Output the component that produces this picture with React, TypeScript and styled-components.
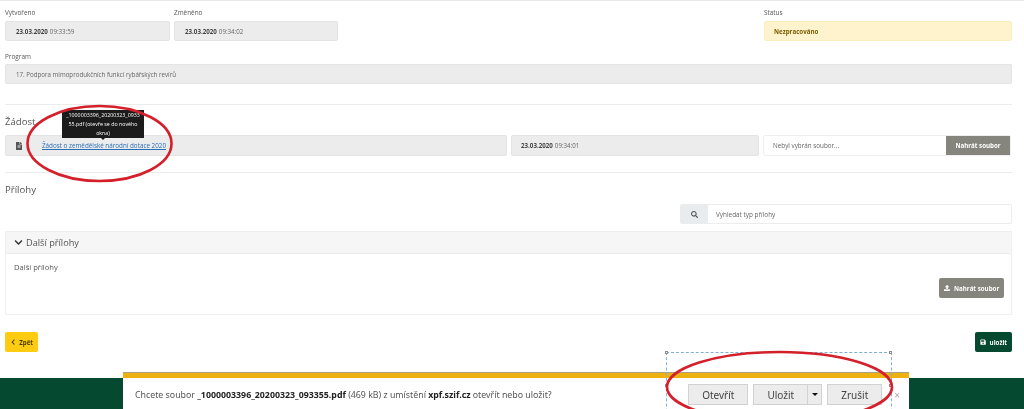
import React from 'react'
import styled, { createGlobalStyle } from 'styled-components'
import { FaChevronDown, FaChevronLeft, FaFileAlt, FaSave, FaSearch, FaUpload } from 'react-icons/fa'

const Global = createGlobalStyle`
  html, body {
    margin: 0;
    padding: 0;
    background: #fff;
  }
  * {
    box-sizing: border-box;
  }
`

const Page = styled.div`
  position: relative;
  width: 1024px;
  height: 409px;
  overflow: hidden;
  background: #fff;
  font-family: "Open Sans", "Liberation Sans", sans-serif;
  color: #555;
  filter: blur(0.45px);
`

const Content = styled.div`
  padding: 0 12px 0 5px;
  border-top: 1px solid #e8e8e8;
`

const TopGrid = styled.div`
  display: grid;
  grid-template-columns: 165px 164px 1fr 248px;
  column-gap: 4px;
  padding-top: 7px;
`

const Column = styled.div<{ $col?: number }>`
  grid-column: ${(p) => p.$col ?? 'auto'};
`

const Label = styled.div`
  font-size: 6.4px;
  line-height: 10px;
  margin-bottom: 3px;
  color: #555;
`

const Field = styled.div<{ $tone?: 'grey' | 'yellow' }>`
  height: 20px;
  display: flex;
  align-items: center;
  padding-left: ${(p) => (p.$tone === 'yellow' ? 9 : 10)}px;
  font-size: 6.2px;
  border-radius: 2px;
  background: ${(p) => (p.$tone === 'yellow' ? '#fff3cd' : '#ececec')};
  border: 1px solid ${(p) => (p.$tone === 'yellow' ? '#fbeebb' : '#e4e4e4')};
  color: ${(p) => (p.$tone === 'yellow' ? '#7a5c00' : '#666')};

  b {
    color: #444;
    margin-right: 2px;
  }
`

const ProgramBlock = styled.div`
  margin-top: 11px;

  ${Label} {
    margin-bottom: 2px;
  }
`

const Rule = styled.hr<{ $top: number }>`
  border: 0;
  border-top: 1px solid #ececec;
  margin: ${(p) => p.$top}px 0 0;
`

const Heading = styled.h3<{ $top: number }>`
  margin: ${(p) => p.$top}px 0 0;
  font-size: 9.6px;
  line-height: 16px;
  font-weight: 400;
  color: #555;
`

const RequestRow = styled.div`
  display: grid;
  grid-template-columns: 502px 248px 248px;
  column-gap: 4px;
  margin-top: 5px;
  height: 21px;
`

const FileCell = styled(Field)`
  height: 21px;
  padding-left: 10px;
  gap: 20px;

  svg {
    flex: none;
    width: 6px;
    height: 8px;
    color: #555;
  }
`

const DateCell = styled(Field)`
  height: 21px;
  padding-left: 9px;
`

const FileLink = styled.a`
  font-size: 6.3px;
  color: #2a6db5;
  text-decoration: underline;
`

const UploadBox = styled.div`
  display: flex;
  height: 21px;
  border: 1px solid #efefef;
  background: #fff;
  border-radius: 2px;
`

const UploadHint = styled.div`
  flex: 1;
  display: flex;
  align-items: center;
  padding-left: 9px;
  font-size: 6.3px;
  color: #666;
`

const GreyButton = styled.button`
  display: flex;
  align-items: center;
  justify-content: center;
  gap: 4px;
  border: 0;
  padding: 0;
  background: #85857d;
  color: #fff;
  font: 700 6.2px "Open Sans", "Liberation Sans", sans-serif;
`

const UploadButton = styled(GreyButton)`
  width: 64px;
`

const SearchRow = styled.div`
  display: flex;
  justify-content: flex-end;
  margin-top: 6px;
`

const SearchBox = styled.div`
  width: 332px;
  height: 20px;
  display: flex;
  border: 1px solid #ececec;
  border-radius: 2px;
`

const SearchAddon = styled.div`
  width: 27px;
  display: flex;
  align-items: center;
  justify-content: center;
  background: #e9ecef;
  color: #555;
  font-size: 7px;
`

const SearchText = styled.div`
  flex: 1;
  display: flex;
  align-items: center;
  padding-left: 8px;
  font-size: 6.4px;
  color: #666;
`

const Panel = styled.section`
  margin-top: 7px;
  height: 84px;
  border: 1px solid #efefef;
  display: flex;
  flex-direction: column;
`

const PanelHead = styled.div`
  height: 22px;
  display: flex;
  align-items: center;
  gap: 3px;
  padding-left: 8px;
  background: #f6f6f6;
  border-bottom: 1px solid #ececec;
  font-size: 9.2px;
  color: #555;

  svg {
    color: #333;
    font-size: 9px;
  }
`

const PanelBody = styled.div`
  flex: 1;
  display: flex;
  flex-direction: column;
  padding: 8px 7px 16px 8px;
  font-size: 7.6px;
  line-height: 10px;
  color: #555;
`

const PanelAction = styled.div`
  margin-top: auto;
  display: flex;
  justify-content: flex-end;
`

const PanelButton = styled(GreyButton)`
  width: 65px;
  height: 20px;
  border-radius: 2px;
`

const ActionRow = styled.div`
  display: flex;
  justify-content: space-between;
  margin-top: 17px;
`

const ActionButton = styled.button<{ $tone: 'yellow' | 'green' }>`
  height: 20px;
  display: flex;
  align-items: center;
  gap: 3px;
  border: 0;
  border-radius: 2px;
  padding: 0 5px;
  font: 700 6.2px "Open Sans", "Liberation Sans", sans-serif;
  background: ${(p) => (p.$tone === 'yellow' ? '#fdcb12' : '#054931')};
  color: ${(p) => (p.$tone === 'yellow' ? '#4a3c00' : '#fff')};
`

const Footer = styled.footer`
  height: 31px;
  margin-top: 26px;
  background: #054931;
`

const Tooltip = styled.div`
  position: absolute;
  left: 62px;
  top: 110px;
  width: 82px;
  height: 28px;
  padding: 1px 4px 0;
  background: #1b1b1b;
  color: #fff;
  font-size: 5.3px;
  line-height: 9px;
  text-align: center;

  &::after {
    content: '';
    position: absolute;
    left: 38px;
    bottom: -2px;
    border: 3px solid transparent;
    border-bottom: 0;
    border-top-color: #1b1b1b;
  }
`

const DownloadBar = styled.div`
  position: absolute;
  left: 123px;
  top: 373px;
  width: 786px;
  height: 36px;
  display: flex;
  align-items: center;
  justify-content: space-between;
  padding: 2px 9px 0 12px;
  background: #fff;
  border-top: 5px solid #edb20f;
  box-shadow: 0 -1px 0 #aaa08a;
  font-family: "Noto Sans", "Open Sans", sans-serif;
  font-size: 8.8px;
  color: #555;

  b {
    color: #222;
  }
`

const BarButtons = styled.div`
  display: flex;
  align-items: center;
  gap: 5px;
`

const BarButton = styled.div<{ $w: number }>`
  width: ${(p) => p.$w}px;
  height: 21px;
  display: flex;
  align-items: center;
  justify-content: center;
  background: #ececec;
  border: 1px solid #d2d2d2;
  font-size: 10px;
  color: #444;
`

const SplitButton = styled.div`
  display: flex;
`

const Caret = styled.div`
  width: 14px;
  height: 21px;
  display: flex;
  align-items: center;
  justify-content: center;
  background: #ececec;
  border: 1px solid #d2d2d2;
  border-left: 0;

  &::after {
    content: '';
    border: 3px solid transparent;
    border-bottom: 0;
    border-top: 3px solid #111;
  }
`

const CloseMark = styled.span`
  margin-left: 7px;
  font-size: 10px;
  color: #aaa;
`

const SelectionFrame = styled.div`
  position: absolute;
  left: 666px;
  top: 352px;
  width: 226px;
  height: 70px;
  border: 1px dashed #7fb0d2;
`

const Handle = styled.span<{ $x: string; $y: string }>`
  position: absolute;
  left: ${(p) => p.$x};
  top: ${(p) => p.$y};
  width: 3px;
  height: 3px;
  margin: -2px 0 0 -2px;
  background: #fff;
  border: 1px solid #8a8a8a;
`

const Markup = styled.svg`
  position: absolute;
  left: 0;
  top: 0;
  pointer-events: none;
`

export default function App() {
  return (
    <Page>
      <Global />
      <Content>
        <TopGrid>
          <Column>
            <Label>Vytvořeno</Label>
            <Field>
              <b>23.03.2020</b> 09:33:59
            </Field>
          </Column>
          <Column>
            <Label>Změněno</Label>
            <Field>
              <b>23.03.2020</b> 09:34:02
            </Field>
          </Column>
          <Column $col={4}>
            <Label>Status</Label>
            <Field $tone="yellow">
              <strong>Nezpracováno</strong>
            </Field>
          </Column>
        </TopGrid>
        <ProgramBlock>
          <Label>Program</Label>
          <Field>17. Podpora mimoprodukčních funkcí rybářských revírů</Field>
        </ProgramBlock>
        <Rule $top={20} />
        <Heading $top={9}>Žádost</Heading>
        <RequestRow>
          <FileCell>
            <FaFileAlt />
            <FileLink>Žádost o zemědělské národní dotace 2020</FileLink>
          </FileCell>
          <DateCell>
            <b>23.03.2020</b> 09:34:01
          </DateCell>
          <UploadBox>
            <UploadHint>Nebyl vybrán soubor...</UploadHint>
            <UploadButton>Nahrát soubor</UploadButton>
          </UploadBox>
        </RequestRow>
        <Rule $top={16} />
        <Heading $top={9}>Přílohy</Heading>
        <SearchRow>
          <SearchBox>
            <SearchAddon>
              <FaSearch />
            </SearchAddon>
            <SearchText>Vyhledat typ přílohy</SearchText>
          </SearchBox>
        </SearchRow>
        <Panel>
          <PanelHead>
            <FaChevronDown />
            Další přílohy
          </PanelHead>
          <PanelBody>
            Další přílohy
            <PanelAction>
              <PanelButton>
                <FaUpload />
                Nahrát soubor
              </PanelButton>
            </PanelAction>
          </PanelBody>
        </Panel>
        <ActionRow>
          <ActionButton $tone="yellow">
            <FaChevronLeft />
            Zpět
          </ActionButton>
          <ActionButton $tone="green">
            <FaSave />
            uložit
          </ActionButton>
        </ActionRow>
      </Content>
      <Footer />
      <Tooltip>
        _1000003396_20200323_0933
        <br />
        55.pdf (otevře se do nového okna)
      </Tooltip>
      <DownloadBar>
        <span>
          Chcete soubor <b>_1000003396_20200323_093355.pdf</b> (469 kB) z umístění <b>xpf.szif.cz</b> otevřít nebo
          uložit?
        </span>
        <BarButtons>
          <BarButton $w={60}>Otevřít</BarButton>
          <SplitButton>
            <BarButton $w={55}>Uložit</BarButton>
            <Caret />
          </SplitButton>
          <BarButton $w={55}>Zrušit</BarButton>
          <CloseMark>×</CloseMark>
        </BarButtons>
      </DownloadBar>
      <SelectionFrame>
        <Handle $x="0" $y="0" />
        <Handle $x="100%" $y="0" />
        <Handle $x="0" $y="48%" />
        <Handle $x="100%" $y="48%" />
      </SelectionFrame>
      <Markup width={1024} height={409} viewBox="0 0 1024 409" fill="none">
        <ellipse cx="99.5" cy="143.5" rx="72" ry="37.5" stroke="#d3202b" strokeWidth="2.6" />
        <ellipse cx="779.5" cy="387" rx="112.5" ry="35" stroke="#d3202b" strokeWidth="2.6" />
      </Markup>
    </Page>
  )
}
